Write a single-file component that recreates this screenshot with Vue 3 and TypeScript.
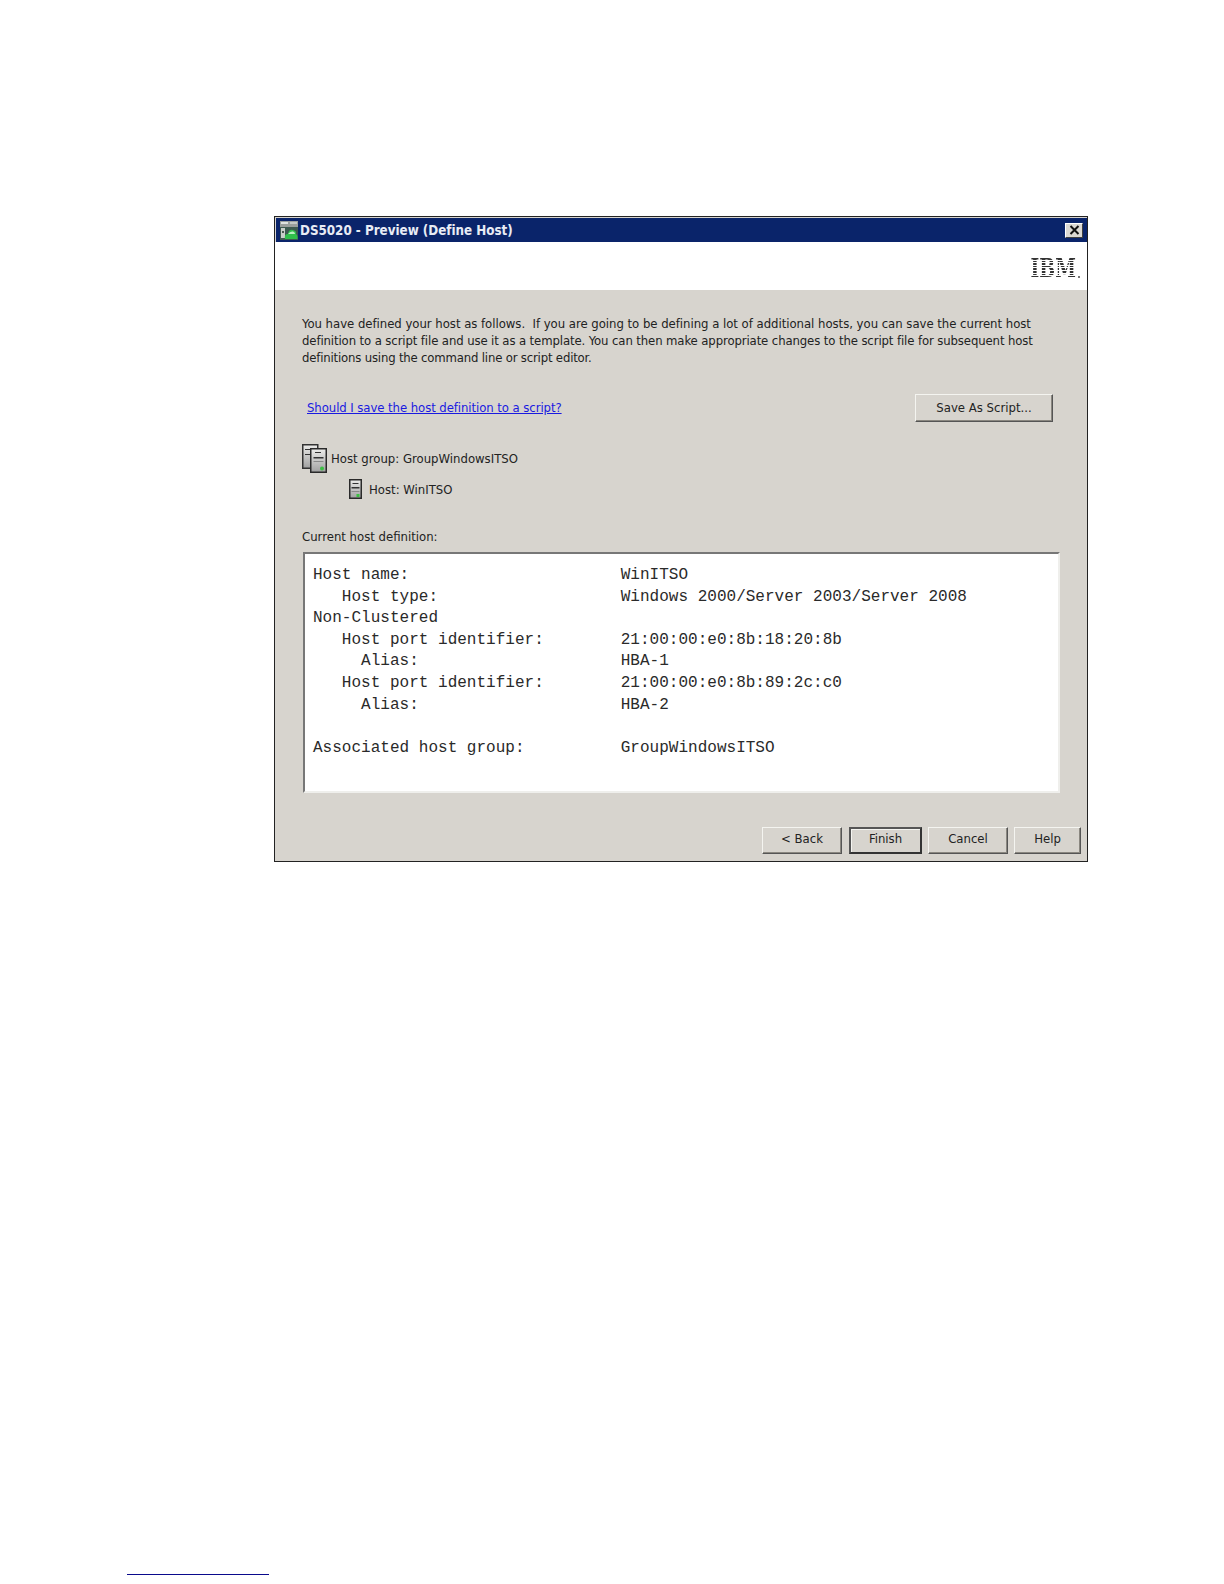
<script setup lang="ts">
const defText = `Host name:                      WinITSO
   Host type:                   Windows 2000/Server 2003/Server 2008
Non-Clustered
   Host port identifier:        21:00:00:e0:8b:18:20:8b
     Alias:                     HBA-1
   Host port identifier:        21:00:00:e0:8b:89:2c:c0
     Alias:                     HBA-2

Associated host group:          GroupWindowsITSO`;
</script>

<template>
  <div class="page">
    <section class="dialog">
      <header class="titlebar">
        <svg class="appicon" width="18" height="19" viewBox="0 0 18 19">
          <rect x="0" y="0" width="18" height="19" fill="#3d5a50" />
          <rect x="0" y="0" width="18" height="6" fill="#9a9f9c" />
          <rect x="1" y="1" width="7" height="2" fill="#dfe3e0" />
          <rect x="10" y="1" width="7" height="2" fill="#c4c9c6" />
          <rect x="1" y="7" width="4" height="10" fill="#c9cfca" />
          <rect x="2" y="10" width="2" height="2" fill="#4a5a50" />
          <path d="M5 18 Q4 13 8 13 Q9 8 13 9 Q17 10 16 13 Q18 14 17.5 18 Z" fill="#2fc04a" />
          <path d="M8 13 Q10 10 13 10.500 Q15 11 15 13 Z" fill="#b8f0c0" />
        </svg>
        <span class="title">DS5020 - Preview (Define Host)</span>
        <span class="close">
          <svg width="11" height="10" viewBox="0 0 11 10"><path d="M1.500 1 L9.500 9 M9.500 1 L1.500 9" stroke="#111" stroke-width="2" /></svg>
        </span>
      </header>

      <div class="banner">
        <span class="ibm">IBM</span>
        <i class="ibmdot"></i>
      </div>

      <div class="body">
        <p class="intro"><span class="l1">You have defined your host as follows.&nbsp; If you are going to be defining a lot of additional hosts, you can save the current host</span><br /><span class="l2">definition to a script file and use it as a template. You can then make appropriate changes to the script file for subsequent host</span><br /><span class="l3">definitions using the command line or script editor.</span></p>

        <div class="linkrow">
          <a class="link">Should I save the host definition to a script?</a>
          <button class="btn save">Save As Script...</button>
        </div>

        <div class="tree group">
          <svg width="26" height="29" viewBox="0 0 26 29">
            <defs>
              <linearGradient id="srv" x1="0" y1="0" x2="0" y2="1">
                <stop offset="0" stop-color="#ececea" />
                <stop offset="1" stop-color="#a0a0a0" />
              </linearGradient>
            </defs>
            <rect x="0.750" y="0.750" width="15" height="23.500" fill="url(#srv)" stroke="#333" stroke-width="1.500" />
            <rect x="3" y="5" width="5" height="1" fill="#333" />
            <rect x="3" y="10" width="5" height="1" fill="#333" />
            <rect x="8.750" y="4.750" width="15.500" height="23.500" fill="url(#srv)" stroke="#2a2a2a" stroke-width="1.500" />
            <rect x="13" y="8" width="6" height="1" fill="#333" />
            <rect x="11.500" y="13" width="10" height="1.500" fill="#333" />
            <rect x="11.500" y="17" width="10" height="1" fill="#888" />
            <circle cx="20" cy="24.500" r="2" fill="#3cc043" />
          </svg>
          <span>Host group: GroupWindowsITSO</span>
        </div>
        <div class="tree host">
          <svg width="13" height="20" viewBox="0 0 13 20">
            <rect x="0.750" y="0.750" width="11.500" height="18.500" fill="url(#srv)" stroke="#2a2a2a" stroke-width="1.500" />
            <rect x="3.500" y="4" width="6" height="1" fill="#333" />
            <rect x="2.500" y="8" width="8" height="1.500" fill="#333" />
            <rect x="2.500" y="12" width="8" height="1" fill="#888" />
            <rect x="7.500" y="15" width="3" height="3" fill="#3cc043" />
          </svg>
          <span>Host: WinITSO</span>
        </div>

        <div class="deflabel">Current host definition:</div>
        <pre class="definition">{{ defText }}</pre>
      </div>

      <footer class="buttons">
        <button class="btn back">&lt; Back</button>
        <button class="btn finish">Finish</button>
        <button class="btn cancel">Cancel</button>
        <button class="btn help">Help</button>
      </footer>
    </section>
    <div class="footnote-rule"></div>
  </div>
</template>

<style>
html, body { background: #fff; }
</style>

<style scoped>
.page {
  width: 1224px;
  height: 1584px;
  position: relative;
  padding: 216px 0 0 274px;
  box-sizing: border-box;
  overflow: hidden;
  background: #fff;
}
.dialog {
  width: 814px;
  height: 646px;
  box-sizing: border-box;
  border: 1px solid #222;
  background: #d7d4ce;
  display: flex;
  flex-direction: column;
  font-family: "DejaVu Sans Condensed", "DejaVu Sans", sans-serif;
  font-size: 13px;
  color: #222;
}
.titlebar {
  height: 24px;
  margin: 1px 0 0 1px;
  background: #0a246a;
  display: flex;
  align-items: center;
  padding: 0 4px 0 4px;
  flex: none;
}
.appicon { flex: none; }
.title {
  margin-left: 2px;
  color: #e8ecf5;
  font-weight: 700;
  font-size: 13.3px;
  letter-spacing: -0.02px;
}
.close {
  margin-left: auto;
  width: 18px;
  height: 15px;
  background: #dcd9d3;
  border: 1px solid;
  border-color: #fff #404040 #404040 #fff;
  display: flex;
  align-items: center;
  justify-content: center;
  box-sizing: border-box;
}
.banner {
  height: 48px;
  background: #fff;
  flex: none;
  display: flex;
  justify-content: flex-end;
  align-items: flex-end;
  padding: 0 7px 11px 0;
  box-sizing: border-box;
}
.ibm {
  font-family: "DejaVu Serif", serif;
  font-weight: 700;
  font-size: 26px;
  line-height: 21px;
  height: 21px;
  letter-spacing: 0;
  transform: scaleX(0.72);
  transform-origin: right center;
  background-image: repeating-linear-gradient(to bottom, #333 0, #333 1.6px, #fff 1.6px, #fff 2.6px);
  -webkit-background-clip: text;
  background-clip: text;
  color: transparent;
}
.ibmdot {
  width: 2px;
  height: 2px;
  background: #777;
  margin: 0 0 1px 2px;
  flex: none;
}
.body {
  flex: 1;
  padding: 25px 27px 0 27px;
  min-height: 0;
}
.intro {
  margin: 0;
  line-height: 17px;
  white-space: nowrap;
}
.l1 { letter-spacing: -0.025px; }
.l2 { letter-spacing: -0.11px; }
.l3 { letter-spacing: -0.18px; }
.linkrow {
  display: flex;
  align-items: center;
  justify-content: space-between;
  margin-top: 27px;
  padding: 0 7px 0 5px;
  height: 29px;
}
.link {
  color: #1a1ae0;
  text-decoration: underline;
  letter-spacing: -0.07px;
}
.btn {
  font: inherit;
  color: #222;
  background: #d7d4ce;
  border: 1px solid;
  border-color: #f4f4f0 #555 #555 #f4f4f0;
  box-shadow: inset -1px -1px 0 #8a8780;
  padding: 0 0 4px;
  box-sizing: border-box;
  height: 27px;
}
.save { width: 138px; height: 28px; padding-bottom: 0; }
.tree {
  display: flex;
  align-items: center;
}
.group { margin-top: 21px; gap: 3px; height: 30px; }
.host { margin-top: 2px; margin-left: 47px; gap: 7px; height: 26px; padding-top: 2px; box-sizing: border-box; }
.deflabel { margin-top: 27px; line-height: 17px; }
.definition {
  margin: 7px 0 0 1px;
  width: 757px;
  height: 241px;
  box-sizing: border-box;
  background: #fff;
  border: 2px solid;
  border-color: #777 #efefec #efefec #777;
  padding: 11px 0 0 8px;
  font-family: "Liberation Mono", "Courier New", monospace;
  font-size: 16px;
  letter-spacing: 0.015px;
  line-height: 21.6px;
  color: #2a2a2a;
  white-space: pre;
  overflow: hidden;
}
.buttons {
  flex: none;
  display: flex;
  justify-content: flex-end;
  gap: 6px;
  padding: 0 6px 7px 0;
}
.back { width: 80px; margin-right: 1px; }
.finish {
  width: 73px;
  border: 2px solid;
  border-color: #555 #333 #333 #555;
  box-shadow: inset 1px 1px 0 #f4f4f0;
}
.cancel { width: 80px; }
.help { width: 67px; }
.footnote-rule {
  position: absolute;
  left: 127px;
  top: 1574px;
  width: 142px;
  height: 1px;
  background: #0a0a8c;
}
</style>
